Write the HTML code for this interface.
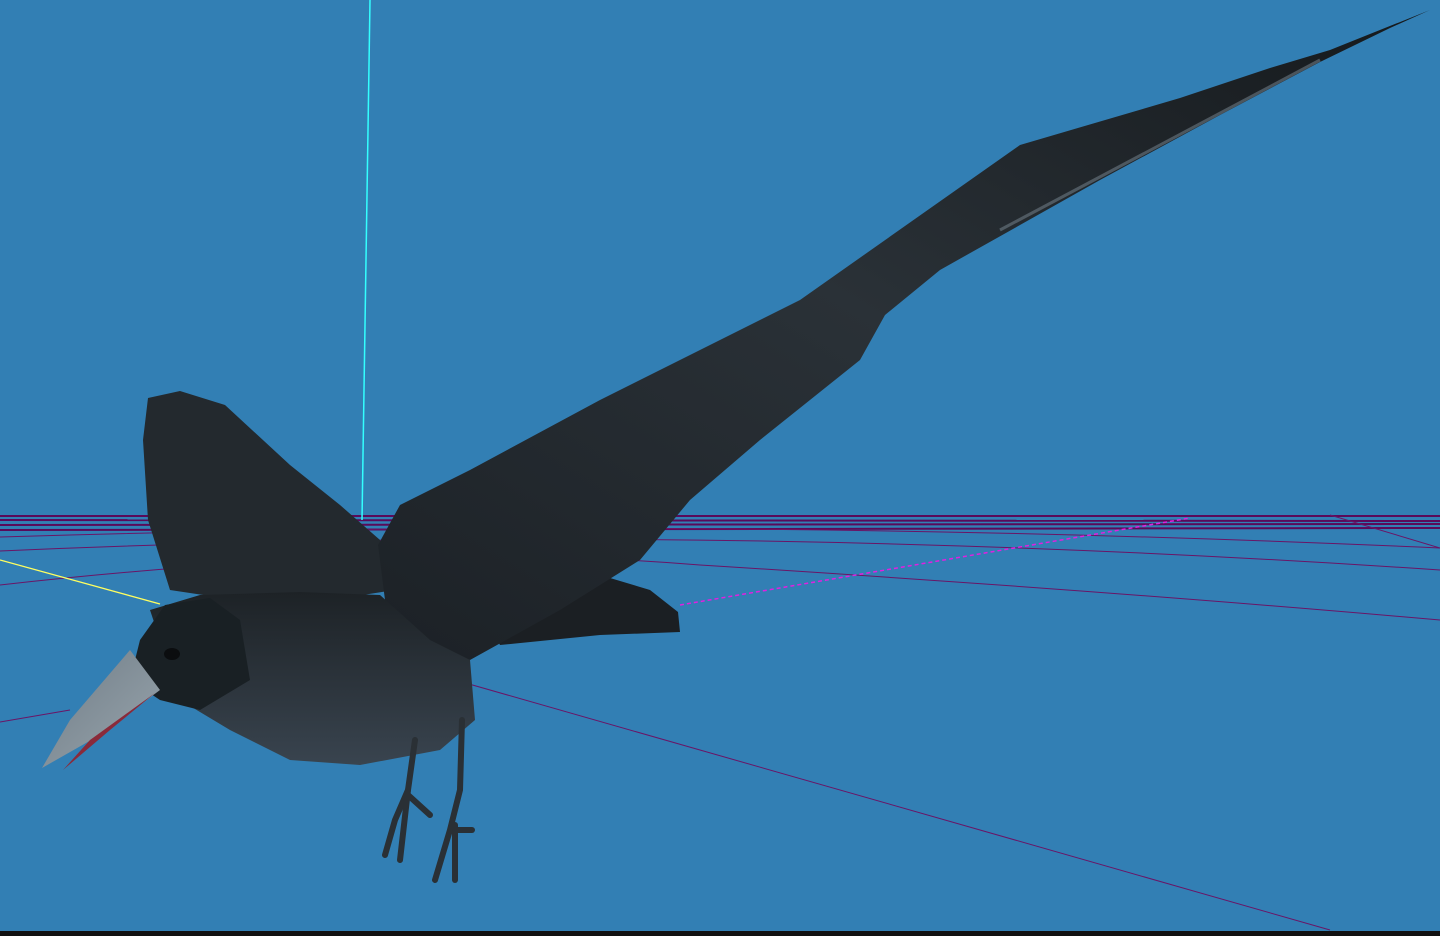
<!DOCTYPE html>
<html><head><meta charset="utf-8"><style>html,body{margin:0;padding:0;overflow:hidden;background:#327fb4}svg{display:block}</style></head>
<body>
<svg width="1440" height="936" viewBox="0 0 1440 936" xmlns="http://www.w3.org/2000/svg">
<defs>
<linearGradient id="wg" x1="0" y1="1" x2="1" y2="0">
<stop offset="0" stop-color="#1c2126"/><stop offset="0.5" stop-color="#2a3137"/><stop offset="1" stop-color="#15191c"/>
</linearGradient>
<linearGradient id="bg2" x1="0" y1="0" x2="0" y2="1">
<stop offset="0" stop-color="#1d2226"/><stop offset="1" stop-color="#39444f"/>
</linearGradient>
<linearGradient id="bk" x1="0" y1="0" x2="1" y2="1">
<stop offset="0" stop-color="#6f7c86"/><stop offset="1" stop-color="#9aa6ae"/>
</linearGradient>
</defs>
<rect width="1440" height="936" fill="#327fb4"/>
<rect y="931" width="1440" height="5" fill="#111"/>
<!-- grid lines -->
<g stroke="#5a0a5a" stroke-width="2" fill="none">
<line x1="0" y1="516" x2="1440" y2="516"/>
<line x1="0" y1="520" x2="1440" y2="521"/>
<line x1="0" y1="525" x2="1440" y2="524"/>
<line x1="0" y1="530" x2="1440" y2="528"/>
</g>
<g stroke="#6a1566" stroke-width="1" fill="none">
<path d="M0 537 Q700 515 1440 548"/>
<path d="M0 551 Q700 520 1440 570"/>
<path d="M0 585 Q400 540 700 565 Q1100 590 1440 620"/>
<line x1="420" y1="670" x2="1330" y2="930"/>
<line x1="0" y1="722" x2="70" y2="710"/>
<line x1="1330" y1="515" x2="1440" y2="548"/>
</g>
<line x1="680" y1="605" x2="1190" y2="518" stroke="#e020e0" stroke-width="1.5" stroke-dasharray="4 3"/>
<line x1="370" y1="0" x2="362" y2="520" stroke="#3ff" stroke-width="1.5"/>
<line x1="0" y1="560" x2="160" y2="604" stroke="#ffff60" stroke-width="1.3"/>
<!-- left wing -->
<path d="M148 398 L180 391 L225 405 L290 465 L340 505 L380 540 L395 590 L330 600 L250 602 L170 590 L148 520 L143 440 Z" fill="#23292e"/>
<!-- tail -->
<path d="M470 585 L600 575 L650 590 L678 612 L680 632 L600 635 L500 645 Z" fill="#1b1f23"/>
<!-- right wing -->
<path d="M378 545 L400 505 L470 470 L600 400 L800 300 L1020 145 L1180 98 L1270 68 L1330 50 L1430 10 L1390 28 L1320 62 L1220 115 L1100 180 L1020 225 L940 270 L885 315 L860 360 L760 440 L690 500 L640 560 L560 610 L470 660 L420 650 L385 600 Z" fill="url(#wg)"/>
<path d="M1000 230 Q1150 150 1320 60" stroke="#6d7a84" stroke-width="3" fill="none" opacity="0.6"/>
<!-- body -->
<path d="M150 610 L200 595 L300 592 L380 595 L430 640 L470 660 L475 720 L440 750 L360 765 L290 760 L230 730 L180 700 Z" fill="url(#bg2)"/>
<!-- head -->
<path d="M140 640 L165 605 L210 598 L240 620 L250 680 L200 710 L160 700 L130 680 Z" fill="#192024"/>
<ellipse cx="172" cy="654" rx="8" ry="6" fill="#0b0d0f"/>
<!-- beak -->
<path d="M130 650 L160 690 L100 735 L42 768 L70 720 Z" fill="url(#bk)"/>
<path d="M155 693 L110 730 L63 770 L90 740 Z" fill="#8a2a3a"/>
<!-- legs -->
<g stroke="#2a3035" stroke-width="6" fill="none" stroke-linecap="round">
<path d="M415 740 L408 790 L395 820 L385 855"/>
<path d="M408 790 L400 860"/>
<path d="M408 795 L430 815"/>
<path d="M462 720 L460 790 L450 830 L435 880"/>
<path d="M455 825 L455 880"/>
<path d="M455 830 L472 830"/>
</g>
</svg>
</body></html>
